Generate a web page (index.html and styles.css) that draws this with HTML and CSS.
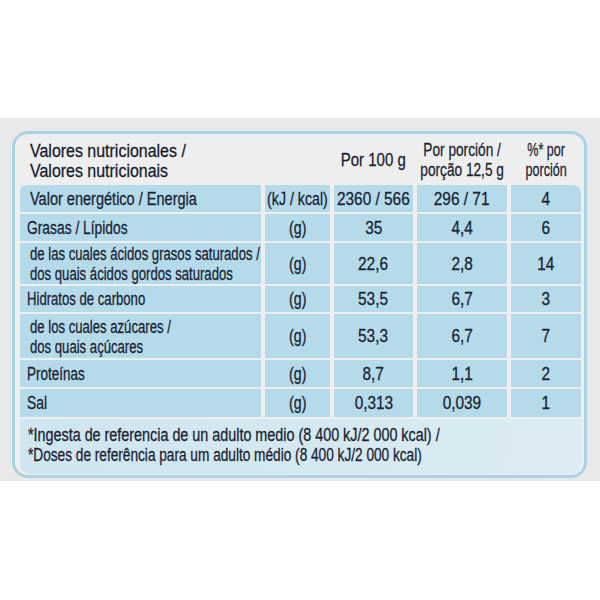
FILE: index.html
```html
<!DOCTYPE html>
<html lang="es">
<head>
<meta charset="utf-8">
<title>Valores nutricionales</title>
<link rel="stylesheet" href="styles.css">
</head>
<body>
<div class="band">
  <div class="panel">
    <div class="grid">
      <div class="hd hd-title"><span class="t">Valores nutricionales /<br>Valores nutricionais</span></div>
      <div class="hd"></div>
      <div class="hd hd-c"><span class="t h3">Por 100 g</span></div>
      <div class="hd hd-c"><span class="t h4">Por porción /<br>porção 12,5 g</span></div>
      <div class="hd hd-c"><span class="t h5">%* por<br>porción</span></div>

      <div class="c lab sub tl"><span class="t x85">Valor energético / Energia</span></div>
      <div class="c"><span class="t u">(kJ / kcal)</span></div>
      <div class="c"><span class="t n">2360 / 566</span></div>
      <div class="c"><span class="t n">296 / 71</span></div>
      <div class="c tr"><span class="t n">4</span></div>

      <div class="c lab"><span class="t x81">Grasas / Lípidos</span></div>
      <div class="c"><span class="t u">(g)</span></div>
      <div class="c"><span class="t n">35</span></div>
      <div class="c"><span class="t n">4,4</span></div>
      <div class="c"><span class="t n">6</span></div>

      <div class="c lab sub two"><span class="t">de las cuales ácidos grasos saturados /<br>dos quais ácidos gordos saturados</span></div>
      <div class="c"><span class="t u">(g)</span></div>
      <div class="c"><span class="t n">22,6</span></div>
      <div class="c"><span class="t n">2,8</span></div>
      <div class="c"><span class="t n">14</span></div>

      <div class="c lab"><span class="t">Hidratos de carbono</span></div>
      <div class="c"><span class="t u">(g)</span></div>
      <div class="c"><span class="t n">53,5</span></div>
      <div class="c"><span class="t n">6,7</span></div>
      <div class="c"><span class="t n">3</span></div>

      <div class="c lab sub two"><span class="t">de los cuales azúcares /<br>dos quais açúcares</span></div>
      <div class="c"><span class="t u">(g)</span></div>
      <div class="c"><span class="t n">53,3</span></div>
      <div class="c"><span class="t n">6,7</span></div>
      <div class="c"><span class="t n">7</span></div>

      <div class="c lab"><span class="t x79">Proteínas</span></div>
      <div class="c"><span class="t u">(g)</span></div>
      <div class="c"><span class="t n">8,7</span></div>
      <div class="c"><span class="t n">1,1</span></div>
      <div class="c"><span class="t n">2</span></div>

      <div class="c lab"><span class="t x81">Sal</span></div>
      <div class="c"><span class="t u">(g)</span></div>
      <div class="c"><span class="t n">0,313</span></div>
      <div class="c"><span class="t n">0,039</span></div>
      <div class="c"><span class="t n">1</span></div>

      <div class="foot">
        <span class="t f1">*Ingesta de referencia de un adulto medio (8 400 kJ/2 000 kcal) /</span><br>
        <span class="t f2">*Doses de referência para um adulto médio (8 400 kJ/2 000 kcal)</span>
      </div>
    </div>
  </div>
</div>
</body>
</html>
```

FILE: styles.css
```css
html, body {
  margin: 0;
  padding: 0;
  background: #ffffff;
}
body {
  font-family: "Liberation Sans", Arial, sans-serif;
  color: #1b2434;
  -webkit-text-stroke: 0.3px #1b2434;
  padding-top: 118px;
}
.band {
  background: #e9e9e9;
  height: 363px;
  padding-top: 13px;
  box-sizing: border-box;
}
.panel {
  margin-left: 12px;
  width: 575px;
  height: 347px;
  box-sizing: border-box;
  border: 3px solid #a9d3e5;
  border-radius: 16px;
  background: #eeeeee;
  padding: 0 3px 0 5px;
}
.grid {
  display: grid;
  grid-template-columns: 241px 65px 79px 90px 70px;
  grid-template-rows: 49px 27px 27px 41px 26px 44px 27px 28px 55px;
  column-gap: 4px;
  row-gap: 2px;
  font-size: 17.5px;
  line-height: 20px;
}
.t {
  display: inline-block;
  white-space: nowrap;
  transform: scaleX(0.75);
  transform-origin: left center;
}
.t.x85 { transform: scaleX(0.83); }
.t.x81 { transform: scaleX(0.79); }
.t.x79 { transform: scaleX(0.77); }
.t.u {
  transform: scaleX(0.81);
  transform-origin: center center;
}
.t.n {
  transform: scaleX(0.88);
  transform-origin: center center;
}
.hd {
  display: flex;
  align-items: center;
  font-size: 19px;
  line-height: 20px;
}
.hd-title {
  padding-left: 10px;
  padding-top: 4px;
  color: #141c2a;
}
.hd-title .t {
  transform: scaleX(0.84);
}
.hd-c {
  justify-content: center;
  text-align: center;
  padding-top: 2px;
}
.hd-c .t {
  transform-origin: center center;
}
.t.h3 { transform: scaleX(0.79); }
.t.h4 { transform: scaleX(0.72); }
.t.h5 { transform: scaleX(0.66); }
.c {
  background: #b5dbea;
  display: flex;
  align-items: center;
  justify-content: center;
  text-align: center;
}
.lab {
  justify-content: flex-start;
  text-align: left;
  padding-left: 7px;
}
.lab.sub {
  padding-left: 10px;
}
.lab.two {
  padding-top: 1px;
}
.tl {
  border-top-left-radius: 6px;
}
.tr {
  border-top-right-radius: 8px;
}
.foot {
  grid-column: 1 / -1;
  background: linear-gradient(100deg, #cfe5ef 0%, #d6e9f1 60%, #dcedf3 100%);
  border-radius: 0 0 10px 10px;
  padding: 6px 0 0 8px;
  line-height: 20px;
  font-size: 17.5px;
}
.t.f1 { transform: scaleX(0.82); }
.t.f2 { transform: scaleX(0.78); }
```
